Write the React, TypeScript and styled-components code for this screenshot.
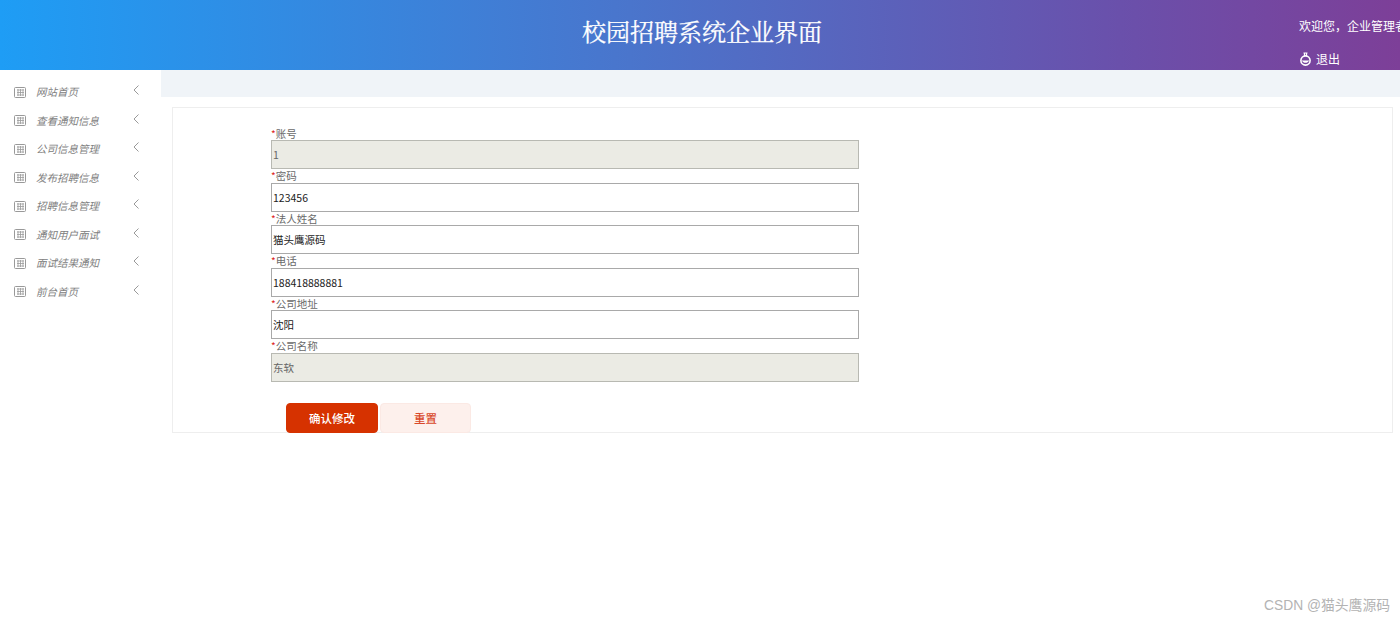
import React from "react";
import styled, { createGlobalStyle } from "styled-components";

const Global = createGlobalStyle`
  html, body { margin: 0; padding: 0; background: #fff; overflow: hidden; }
  body { font-family: "Liberation Sans", Arial, "Noto Sans CJK SC", sans-serif; width: 1400px; height: 620px; }
  * { box-sizing: border-box; }
`;
const Page = styled.div`
  position: relative; width: 1400px; height: 620px; overflow: hidden; display: flex; flex-direction: column;
`;
const Header = styled.header`
  height: 70px; flex: none; display: flex; color: #fff; padding-left: 582px;
  background: linear-gradient(90deg, #1e9df5 0%, #4a75cc 45%, #6a50ab 80%, #7d3f98 100%);
`;
const Title = styled.h1`
  margin: 17px 0 0; font: 400 24px/28px "Noto Serif CJK SC", "Liberation Serif", "Noto Sans CJK SC", serif;
  letter-spacing: 0; white-space: nowrap; height: 28px; -webkit-text-stroke: 0.25px #fff;
`;
const User = styled.div`
  margin-left: auto; width: 101px; overflow: hidden; white-space: nowrap; font-size: 12px; padding-top: 18px;
  font-family: "Noto Sans CJK SC", sans-serif;
`;
const Welcome = styled.div`line-height: 16px; height: 16px;`;
const Logout = styled.div`
  display: flex; align-items: center; gap: 4px; margin-top: 17px; line-height: 16px;
`;
const Body = styled.div`display: flex; flex: 1; min-height: 0;`;
const Side = styled.nav`width: 161px; flex: none; padding-top: 8px;`;
const MenuItem = styled.div`
  height: 28.5px; display: flex; align-items: center; padding-left: 14px;
`;
const MenuLabel = styled.span`
  margin-left: 10px; font: italic 10.5px/14px "Noto Sans CJK SC", sans-serif; width: 97px; color: #808080;
`;
const Chevron = styled.svg`width: 6px; height: 10px; margin-top: -4px;`;
const Main = styled.main`flex: 1; min-width: 0; display: flex; flex-direction: column;`;
const Band = styled.div`height: 27px; flex: none; background: #f0f4f8;`;
const Card = styled.section`
  margin: 10px 7px 0 11px; height: 326px; border: 1px solid #eeeeee; padding: 18.5px 0 0 98px;
`;
const Field = styled.div`width: 588px; height: 42.5px; display: flex; flex-direction: column;`;
const Label = styled.label`
  height: 13.5px; font: 10.5px/13.5px "Noto Sans CJK SC", sans-serif; color: #6a6a6a; white-space: nowrap;
`;
const Star = styled.span`color: #d22; font-size: 10px;`;
const Input = styled.input<{ $off?: boolean }>`
  width: 588px; height: 29px; flex: none; border: 1px solid ${p => (p.$off ? "#b8b9b2" : "#a9a9a9")};
  background: ${p => (p.$off ? "#ebebe4" : "#fff")}; color: ${p => (p.$off ? "#666" : "#222")};
  padding: 0 1px; font: 10.5px "Noto Sans CJK SC", "Liberation Sans", sans-serif; outline: none;
  &:disabled { opacity: 1; -webkit-text-fill-color: #666; }
`;
const Actions = styled.div`display: flex; gap: 2px; margin: 21.5px 0 0 15px;`;
const Button = styled.button<{ $primary?: boolean }>`
  width: ${p => (p.$primary ? 92 : 91)}px; height: 30px; border-radius: 4px; padding: 0 0 1px; cursor: pointer;
  font: 500 11.5px "Noto Sans CJK SC", sans-serif;
  border: 1px solid ${p => (p.$primary ? "#d63200" : "#fbe9e4")};
  background: ${p => (p.$primary ? "#d63200" : "#fdf0ec")};
  color: ${p => (p.$primary ? "#fff" : "#d9482a")};
`;
const Watermark = styled.div`
  position: absolute; right: 10px; top: 597px; font: 13.8px/18px "Liberation Sans", "Noto Sans CJK SC", sans-serif;
  color: #b3b3b3;
`;

const menu = ["网站首页", "查看通知信息", "公司信息管理", "发布招聘信息", "招聘信息管理", "通知用户面试", "面试结果通知", "前台首页"];
const fields = [
  { label: "账号", value: "1", off: true },
  { label: "密码", value: "123456" },
  { label: "法人姓名", value: "猫头鹰源码" },
  { label: "电话", value: "188418888881" },
  { label: "公司地址", value: "沈阳" },
  { label: "公司名称", value: "东软", off: true },
];

const GridIcon = () => (
  <svg width="12" height="11" viewBox="0 0 12 11" fill="none" stroke="#999" strokeWidth="1">
    <rect x="0.5" y="0.5" width="11" height="10" rx="1" />
    <path d="M3 3h7M3 5.5h7M3 8h7M4 2v7M6.5 2v7M9 2v7" strokeWidth="0.8" />
  </svg>
);
const LogoutIcon = () => (
  <svg width="13" height="14" viewBox="0 0 13 14" fill="none" stroke="#fff" strokeWidth="1.6">
    <path d="M4.5 1h4M5.5 1.2v3M7.5 1.2v3" strokeWidth="1.2" />
    <circle cx="6.5" cy="8.5" r="4.6" />
    <path d="M2.8 8.4c1.8 3.2 5.6 3.2 7.4 0z" fill="#fff" stroke="none" />
  </svg>
);

export default function App() {
  return (
    <Page>
      <Global />
      <Header>
        <Title>校园招聘系统企业界面</Title>
        <User>
          <Welcome>欢迎您，企业管理者</Welcome>
          <Logout><LogoutIcon />退出</Logout>
        </User>
      </Header>
      <Body>
        <Side>
          {menu.map(m => (
            <MenuItem key={m}>
              <GridIcon />
              <MenuLabel>{m}</MenuLabel>
              <Chevron viewBox="0 0 6 10" fill="none" stroke="#999" strokeWidth="1"><path d="M5.5 .5 1 5l4.5 4.5" /></Chevron>
            </MenuItem>
          ))}
        </Side>
        <Main>
          <Band />
          <Card>
            {fields.map(f => (
              <Field key={f.label}>
                <Label><Star>*</Star>{f.label}</Label>
                <Input $off={f.off} disabled={f.off} defaultValue={f.value} />
              </Field>
            ))}
            <Actions>
              <Button $primary>确认修改</Button>
              <Button>重置</Button>
            </Actions>
          </Card>
        </Main>
      </Body>
      <Watermark>CSDN @猫头鹰源码</Watermark>
    </Page>
  );
}
